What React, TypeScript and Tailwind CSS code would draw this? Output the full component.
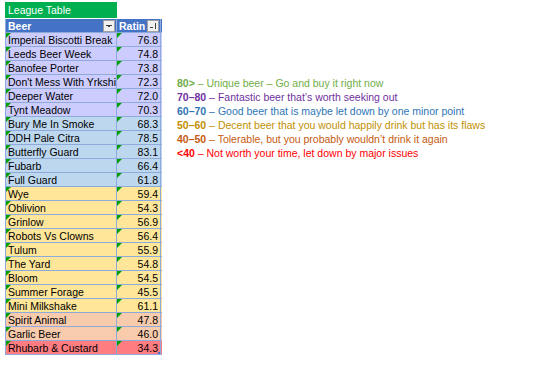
const rows: [string, string, string][] = [
  ["Imperial Biscotti Break", "76.8", "bg-[#ccccff]"],
  ["Leeds Beer Week", "74.8", "bg-[#ccccff]"],
  ["Banofee Porter", "73.8", "bg-[#ccccff]"],
  ["Don't Mess With Yrkshire", "72.3", "bg-[#ccccff]"],
  ["Deeper Water", "72.0", "bg-[#ccccff]"],
  ["Tynt Meadow", "70.3", "bg-[#ccccff]"],
  ["Bury Me In Smoke", "68.3", "bg-[#bdd7ee]"],
  ["DDH Pale Citra", "78.5", "bg-[#bdd7ee]"],
  ["Butterfly Guard", "83.1", "bg-[#bdd7ee]"],
  ["Fubarb", "66.4", "bg-[#bdd7ee]"],
  ["Full Guard", "61.8", "bg-[#bdd7ee]"],
  ["Wye", "59.4", "bg-[#ffe699]"],
  ["Oblivion", "54.3", "bg-[#ffe699]"],
  ["Grinlow", "56.9", "bg-[#ffe699]"],
  ["Robots Vs Clowns", "56.4", "bg-[#ffe699]"],
  ["Tulum", "55.9", "bg-[#ffe699]"],
  ["The Yard", "54.8", "bg-[#ffe699]"],
  ["Bloom", "54.5", "bg-[#ffe699]"],
  ["Summer Forage", "45.5", "bg-[#ffe699]"],
  ["Mini Milkshake", "61.1", "bg-[#ffe699]"],
  ["Spirit Animal", "47.8", "bg-[#f8cbad]"],
  ["Garlic Beer", "46.0", "bg-[#f8cbad]"],
  ["Rhubarb & Custard", "34.3", "bg-[#ff7c80]"],
];

const legend: [string, string, string][] = [
  ["80>", "Unique beer – Go and buy it right now", "text-[#70ad47]"],
  ["70–80", "Fantastic beer that’s worth seeking out", "text-[#7030a0]"],
  ["60–70", "Good beer that is maybe let down by one minor point", "text-[#2e75b6]"],
  ["50–60", "Decent beer that you would happily drink but has its flaws", "text-[#bf9000]"],
  ["40–50", "Tolerable, but you probably wouldn’t drink it again", "text-[#c55a11]"],
  ["<40", "Not worth your time, let down by major issues", "text-[#ff0000]"],
];

function Tick() {
  return (
    <svg className="absolute left-0 top-0" width="5" height="5" viewBox="0 0 5 5">
      <polygon points="0,0 5,0 0,5" fill="#00a000" />
    </svg>
  );
}

function FilterBtn({ sort }: { sort?: boolean }) {
  return (
    <div className="absolute right-[1px] top-[1px] w-[12px] h-[12px] bg-[#f0f0f0] border border-[#a0a0a0] flex items-center justify-center">
      {sort ? (
        <svg width="8" height="8" viewBox="0 0 8 8">
          <rect x="1" y="5" width="3" height="1" fill="#404040" />
          <rect x="6" y="1" width="1" height="6" fill="#404040" />
        </svg>
      ) : (
        <svg width="8" height="8" viewBox="0 0 8 8">
          <rect x="1" y="3" width="6" height="1" fill="#404040" />
          <rect x="3" y="4" width="2" height="1" fill="#404040" />
        </svg>
      )}
    </div>
  );
}

export default function App() {
  return (
    <div className="w-[542px] h-[371px] bg-white flex pl-[5px] pt-[2px] font-['Liberation_Sans',Arial,sans-serif] text-[10.5px] leading-[13px]">
      <div className="w-[157px] flex flex-col">
        <div className="w-[112px] h-[16px] bg-[#00b050] text-white pl-[3px] pt-[2px]">League Table</div>
        <div className="mt-[1px] flex h-[14px] bg-[#4472c4] text-white font-bold border-l border-b border-[#8ea9db] overflow-hidden">
          <div className="relative w-[111px] pl-[2px] pt-[1px] border-r border-[#8ea9db]">
            Beer
            <FilterBtn />
          </div>
          <div className="relative w-[44px] pl-[2px] pt-[1px] border-r border-[#8ea9db] overflow-hidden whitespace-nowrap">
            Ratin
            <FilterBtn sort />
          </div>
        </div>
        {rows.map(([name, score, bg], i) => (
          <div key={name} className={`flex h-[14px] border-l border-b border-[#8ea9db] text-black overflow-hidden ${bg}`}>
            <div className="relative w-[111px] pl-[2px] pt-[1px] border-r border-[#8ea9db] overflow-hidden whitespace-nowrap">
              <Tick />
              {name}
            </div>
            <div className="relative w-[44px] pr-[2px] pt-[1px] text-right border-r border-[#8ea9db]">
              <Tick />
              {score}
              {i === rows.length - 1 && (
                <span className="absolute right-0 bottom-0 w-[2px] h-[2px] bg-[#4472c4]" />
              )}
            </div>
          </div>
        ))}
      </div>
      <div className="ml-[15px] mt-[75px] flex flex-col">
        {legend.map(([range, text, color]) => (
          <div key={range} className={`h-[14px] whitespace-nowrap ${color}`}>
            <span className="font-bold">{range}</span> – {text}
          </div>
        ))}
      </div>
    </div>
  );
}
